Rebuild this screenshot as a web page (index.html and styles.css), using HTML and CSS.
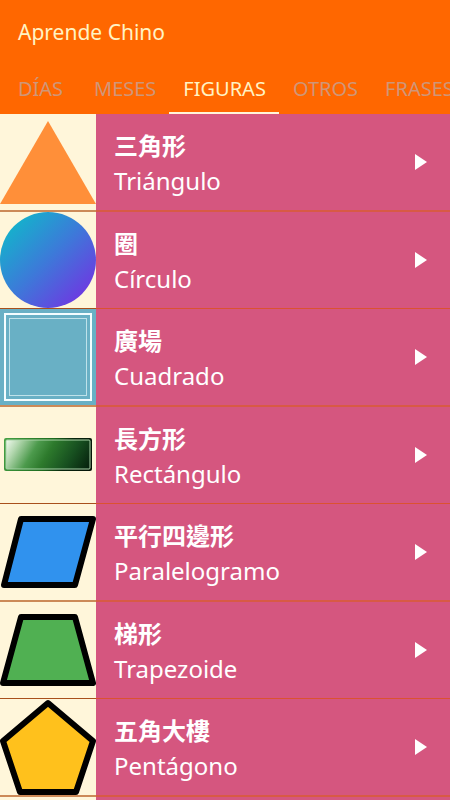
FILE: index.html
```html
<!DOCTYPE html>
<html lang="es">
<head>
    <meta charset="UTF-8">
    <meta name="viewport" content="width=device-width, initial-scale=1.0">
    <title>Aprende Chino</title>
    <link rel="stylesheet" href="styles.css">
</head>
<body>

    <header class="header">
        <h1 class="title">Aprende Chino</h1>
        <nav class="tabs">
            <a class="tab" href="#dias">DÍAS</a>
            <a class="tab" href="#meses">MESES</a>
            <a class="tab active" href="#figuras">FIGURAS</a>
            <a class="tab" href="#otros">OTROS</a>
            <a class="tab" href="#frases">FRASES</a>
        </nav>
    </header>

    <ul class="list" id="figuras">
        <li class="row">
            <svg class="shape" viewBox="0 0 96 96">
                <path d="M48 7 L96 90 H0 Z" fill="#ff8f39"/>
            </svg>
            <button class="word">
                <span class="text">
                    <span class="chinese" lang="zh-Hant">三角形</span>
                    <span class="spanish">Triángulo</span>
                </span>
                <svg class="play" viewBox="0 0 12 16"><path d="M0 0 L12 8 L0 16 Z" fill="#fff"/></svg>
            </button>
        </li>
        <li class="row">
            <svg class="shape" viewBox="0 0 96 96">
                <defs>
                    <linearGradient id="blue" x1="0.1" y1="0.1" x2="0.9" y2="0.9">
                        <stop offset="0" stop-color="#12b5cb"/>
                        <stop offset="0.5" stop-color="#3d79d9"/>
                        <stop offset="1" stop-color="#7036e2"/>
                    </linearGradient>
                </defs>
                <circle cx="48" cy="48" r="48" fill="url(#blue)"/>
            </svg>
            <button class="word">
                <span class="text">
                    <span class="chinese" lang="zh-Hant">圈</span>
                    <span class="spanish">Círculo</span>
                </span>
                <svg class="play" viewBox="0 0 12 16"><path d="M0 0 L12 8 L0 16 Z" fill="#fff"/></svg>
            </button>
        </li>
        <li class="row">
            <svg class="shape" viewBox="0 0 96 96">
                <rect width="96" height="96" fill="#69b0c5"/>
                <rect x="5" y="5" width="86" height="86" fill="none" stroke="#f4fdff" stroke-width="2"/>
                <rect x="9.5" y="9.5" width="77" height="77" fill="none" stroke="#bfe2ea"/>
            </svg>
            <button class="word">
                <span class="text">
                    <span class="chinese" lang="zh-Hant">廣場</span>
                    <span class="spanish">Cuadrado</span>
                </span>
                <svg class="play" viewBox="0 0 12 16"><path d="M0 0 L12 8 L0 16 Z" fill="#fff"/></svg>
            </button>
        </li>
        <li class="row">
            <svg class="shape" viewBox="0 0 96 96">
                <defs>
                    <linearGradient id="green" gradientUnits="userSpaceOnUse" x1="10" y1="26" x2="84" y2="70">
                        <stop offset="0" stop-color="#f2faf0"/>
                        <stop offset="0.14" stop-color="#b4d8b0"/>
                        <stop offset="0.34" stop-color="#4c9a4c"/>
                        <stop offset="0.5" stop-color="#2d7a2c"/>
                        <stop offset="0.75" stop-color="#175020"/>
                        <stop offset="1" stop-color="#06200d"/>
                    </linearGradient>
                    <linearGradient id="frame" gradientUnits="userSpaceOnUse" x1="4" y1="31" x2="92" y2="64">
                        <stop offset="0" stop-color="#47a245"/>
                        <stop offset="0.5" stop-color="#1d6b1e"/>
                        <stop offset="0.7" stop-color="#08250c"/>
                        <stop offset="1" stop-color="#041006"/>
                    </linearGradient>
                </defs>
                <rect x="4" y="31" width="88" height="33" rx="2" fill="url(#frame)"/>
                <rect x="6" y="33" width="84" height="29" rx="1" fill="url(#green)" stroke="#a9d3a8"/>
            </svg>
            <button class="word">
                <span class="text">
                    <span class="chinese" lang="zh-Hant">長方形</span>
                    <span class="spanish">Rectángulo</span>
                </span>
                <svg class="play" viewBox="0 0 12 16"><path d="M0 0 L12 8 L0 16 Z" fill="#fff"/></svg>
            </button>
        </li>
        <li class="row">
            <svg class="shape" viewBox="0 0 96 96">
                <path class="outline" d="M21 15 H93 L75 81 H4 Z" fill="#3092ee"/>
            </svg>
            <button class="word">
                <span class="text">
                    <span class="chinese" lang="zh-Hant">平行四邊形</span>
                    <span class="spanish">Paralelogramo</span>
                </span>
                <svg class="play" viewBox="0 0 12 16"><path d="M0 0 L12 8 L0 16 Z" fill="#fff"/></svg>
            </button>
        </li>
        <li class="row">
            <svg class="shape" viewBox="0 0 96 96">
                <path class="outline" d="M21 15 H75 L93 81 H3 Z" fill="#50b052"/>
            </svg>
            <button class="word">
                <span class="text">
                    <span class="chinese" lang="zh-Hant">梯形</span>
                    <span class="spanish">Trapezoide</span>
                </span>
                <svg class="play" viewBox="0 0 12 16"><path d="M0 0 L12 8 L0 16 Z" fill="#fff"/></svg>
            </button>
        </li>
        <li class="row">
            <svg class="shape" viewBox="0 0 96 96">
                <path class="outline" d="M48 4 L93 42 L76 93 H20 L3 42 Z" fill="#ffc11c"/>
            </svg>
            <button class="word">
                <span class="text">
                    <span class="chinese" lang="zh-Hant">五角大樓</span>
                    <span class="spanish">Pentágono</span>
                </span>
                <svg class="play" viewBox="0 0 12 16"><path d="M0 0 L12 8 L0 16 Z" fill="#fff"/></svg>
            </button>
        </li>
        <li class="row">
            <span class="shape"></span>
            <span class="word"></span>
        </li>
    </ul>

</body>
</html>
```
FILE: styles.css
```css
* {
    box-sizing: border-box;
}
body {
    display: flex;
    flex-direction: column;
    height: 100vh;
    margin: 0;
    font-family: "Noto Sans", "Noto Sans CJK TC", sans-serif;
    background-color: #fff6da;
}
.header {
    flex: none;
    background-color: #ff6700;
}
.title {
    margin: 0;
    padding: 0 18px;
    font-size: 21px;
    font-weight: 400;
    line-height: 64px;
    color: #fff3c4;
}
.tabs {
    display: flex;
    overflow: hidden;
}
.tab {
    flex: none;
    min-width: 80px;
    height: 50px;
    padding: 0 13px 0 14px;
    border-bottom: 2px solid transparent;
    font-size: 20px;
    line-height: 50px;
    text-align: center;
    text-decoration: none;
    color: #cf9678;
}
.tab.active {
    color: #fff3c4;
    border-bottom-color: #fff6da;
}
.list {
    flex: 1;
    min-height: 0;
    margin: 0;
    padding: 0;
    list-style: none;
    overflow-y: auto;
    scrollbar-width: none;
}
.row {
    display: flex;
}
.shape {
    flex: none;
    box-sizing: content-box;
    width: 96px;
    height: 96px;
    background-color: #fff6da;
    border-bottom: 1px solid #a8501c;
}
.outline {
    stroke: #000;
    stroke-width: 6px;
    stroke-linejoin: round;
}
.word {
    flex: 1;
    display: flex;
    align-items: center;
    justify-content: space-between;
    padding: 0 23px 0 18px;
    border: none;
    border-bottom: 1px solid #dc5230;
    background-color: #d5567f;
    font-family: inherit;
    font-size: 24px;
    text-align: left;
    color: #fff;
    cursor: pointer;
}
.row:nth-child(odd) .shape {
    border-bottom: 2px solid #cc8a58;
}
.row:nth-child(odd) .word {
    border-bottom: 2px solid #d85a45;
}
.text {
    display: flex;
    flex-direction: column;
    gap: 2px;
    padding-top: 2px;
    line-height: 34px;
}
.chinese {
    font-family: "Noto Sans CJK TC", sans-serif;
    font-weight: 700;
}
.play {
    width: 12px;
    height: 16px;
}
```
